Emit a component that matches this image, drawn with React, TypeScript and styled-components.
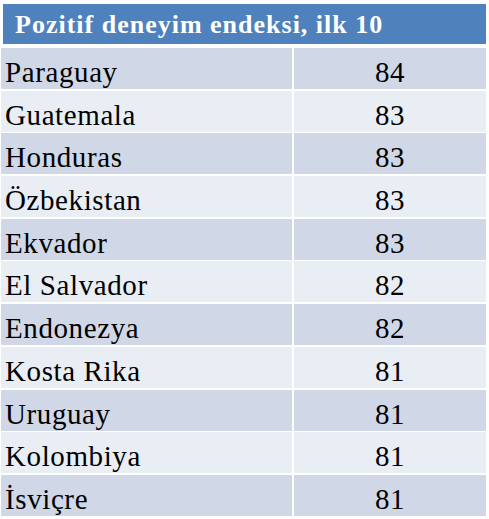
import React from 'react';
import styled, { createGlobalStyle } from 'styled-components';

const rows: [string, number][] = [
    ['Paraguay', 84],
    ['Guatemala', 83],
    ['Honduras', 83],
    ['Özbekistan', 83],
    ['Ekvador', 83],
    ['El Salvador', 82],
    ['Endonezya', 82],
    ['Kosta Rika', 81],
    ['Uruguay', 81],
    ['Kolombiya', 81],
    ['İsviçre', 81],
];

export default () => {
    return <>
        <GlobalStyle />
        <Table>
            <Header>Pozitif deneyim endeksi, ilk 10</Header>
            <Body>
                {rows.map(([country, score], i) => (
                    <React.Fragment key={country}>
                        <Country $odd={i % 2 === 0}>{country}</Country>
                        <Score $odd={i % 2 === 0}>{score}</Score>
                    </React.Fragment>
                ))}
            </Body>
        </Table>
    </>;
}

const GlobalStyle = createGlobalStyle`
    body {
        margin: 0;
        background: #ffffff;
    }
`;

const Table = styled.div`
    width: 489px;
    height: 519px;
    box-sizing: border-box;
    padding: 4px 3px 0 1px;
    font-family: "Liberation Serif", "Times New Roman", serif;
    overflow: hidden;
`;

const Header = styled.div`
    height: 40px;
    box-sizing: border-box;
    margin-left: 2px;
    padding: 1px 0 0 12px;
    background: #4f81bd;
    color: #ffffff;
    font-weight: bold;
    font-size: 26px;
    line-height: 39px;
    letter-spacing: 1px;
    white-space: nowrap;
`;

const Body = styled.div`
    margin-top: 4px;
    display: grid;
    grid-template-columns: 291px 1fr;
    grid-auto-rows: 41px;
    column-gap: 2px;
    row-gap: 1.7px;
`;

const Cell = styled.div<{ $odd: boolean }>`
    box-sizing: border-box;
    padding-top: 4px;
    background: ${p => p.$odd ? '#d0d8e8' : '#e9edf4'};
    color: #000000;
    font-size: 29px;
    line-height: 41px;
    letter-spacing: 0.6px;
    white-space: nowrap;
`;

const Country = styled(Cell)`
    padding-left: 4px;
`;

const Score = styled(Cell)`
    text-align: center;
`;
